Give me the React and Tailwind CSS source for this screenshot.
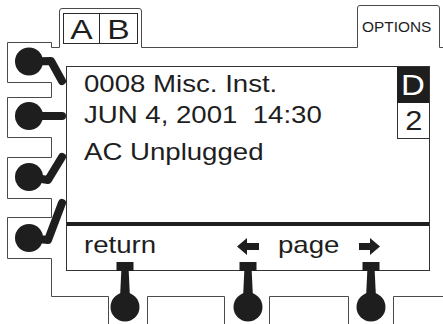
import React from 'react'

// side keys: circle centre y and lever polyline
const SIDE_KEYS = [
  { cy: 61.5, lever: '29,61.5 51,61 62,81' },
  { cy: 116, lever: '29,116 62,116' },
  { cy: 177, lever: '29,177 48,180 62,157' },
  { cy: 238, lever: '29,238 48,240 62,203' },
]

const BOTTOM_KEYS = [125, 248, 371]

const INK = '#1e1e1e'

function LeftArrow() {
  return (
    <svg width="22" height="17" viewBox="0 0 22 17" className="mt-[12px] shrink-0">
      <path d="M0 8.5 L10 0 V5 H22 V12 H10 V17 Z" fill={INK} />
    </svg>
  )
}

function RightArrow() {
  return (
    <svg width="21" height="17" viewBox="0 0 21 17" className="mt-[12px] shrink-0">
      <path d="M21 8.5 L11 0 V5 H0 V12 H11 V17 Z" fill={INK} />
    </svg>
  )
}

function Frame() {
  return (
    <svg
      width="443"
      height="324"
      viewBox="0 0 443 324"
      className="absolute inset-0 pointer-events-none"
    >
      <g fill="none" stroke="#4a4a4a" strokeWidth="1">
        {/* left keys outline */}
        <path d="M59.5 47.5 H51.5 V42.5 H7.5 V82.5 H51.5 V97.5 H7.5 V137.5 H51.5 V157.5 H7.5 V198.5 H51.5 V217.5 H7.5 V258.5 H51.5 V296.5 H108.5 V324" />
        {/* top tabs */}
        <path d="M59.5 47.5 V11 Q59.5 8.5 62 8.5 H139 Q141.5 8.5 141.5 11 V47.5 H357.5 V8 Q357.5 5.5 360 5.5 H437 Q439.5 5.5 439.5 8 V47.5 H443" />
        {/* bottom keys outline */}
        <path d="M147.5 324 V296.5 H224.5 V324 M269.5 324 V296.5 H348.5 V324 M393.5 324 V296.5 H443" />
      </g>
      <g fill={INK}>
        {SIDE_KEYS.map((k) => (
          <g key={k.cy}>
            <circle cx="29" cy={k.cy} r="14" />
            <polyline
              points={k.lever}
              fill="none"
              stroke={INK}
              strokeWidth="8"
              strokeLinecap="round"
              strokeLinejoin="round"
            />
          </g>
        ))}
        {BOTTOM_KEYS.map((cx) => (
          <g key={cx}>
            <rect x={cx - 8.5} y="262" width="17" height="9" />
            <path d={`M${cx - 3.7} 271 H${cx + 3.7} L${cx + 5} 298 H${cx - 5} Z`} />
            <circle cx={cx} cy="307" r="14.5" />
          </g>
        ))}
      </g>
    </svg>
  )
}

export default function App() {
  return (
    <div className="relative w-[443px] h-[324px] overflow-hidden bg-white text-[#1e1e1e] font-['Liberation_Sans',Arial,sans-serif]">
      {/* tab row */}
      <div className="flex items-start h-[66px]">
        <div className="ml-[63px] mt-[13px] flex w-[75px] h-[31px] border border-[#2a2a2a]">
          <div className="w-[36px] border-r border-[#2a2a2a] flex justify-center">
            <span className="block text-[28px] leading-[31px] scale-x-[1.2]">A</span>
          </div>
          <div className="flex-1 flex justify-center">
            <span className="block text-[28px] leading-[31px] scale-x-[1.2]">B</span>
          </div>
        </div>
        <div className="ml-[224px] mt-[20px] text-[14px] leading-[14px] scale-x-[1.1] origin-left">
          OPTIONS
        </div>
      </div>

      {/* display */}
      <div className="ml-[66px] w-[364px] h-[205px] border border-[#333] flex flex-col">
        <div className="flex h-[155px]">
          <div className="flex-1 pl-[17px] pt-[1px] text-[24px] leading-[31px]">
            <div className="scale-x-[1.15] origin-left whitespace-nowrap">0008 Misc. Inst.</div>
            <div className="scale-x-[1.15] origin-left whitespace-pre">JUN 4, 2001  14:30</div>
            <div className="mt-[6px] scale-x-[1.15] origin-left whitespace-nowrap">AC Unplugged</div>
          </div>
          <div className="w-[32px] flex flex-col">
            <div className="h-[36px] bg-[#1e1e1e] text-white flex justify-center">
              <span className="block text-[30px] leading-[36px] scale-x-[1.1]">D</span>
            </div>
            <div className="h-[36px] border-l border-b border-[#333] flex justify-center">
              <span className="block text-[28px] leading-[35px] scale-x-[1.1]">2</span>
            </div>
          </div>
        </div>
        <div className="h-[4px] bg-[#1e1e1e]" />
        <div className="h-[44px] flex items-start pl-[17px] text-[24px] leading-[38px]">
          <div className="w-[153px] scale-x-[1.15] origin-left">return</div>
          <LeftArrow />
          <div className="ml-[19px] w-[81px] scale-x-[1.15] origin-left">page</div>
          <RightArrow />
        </div>
      </div>

      <Frame />
    </div>
  )
}
